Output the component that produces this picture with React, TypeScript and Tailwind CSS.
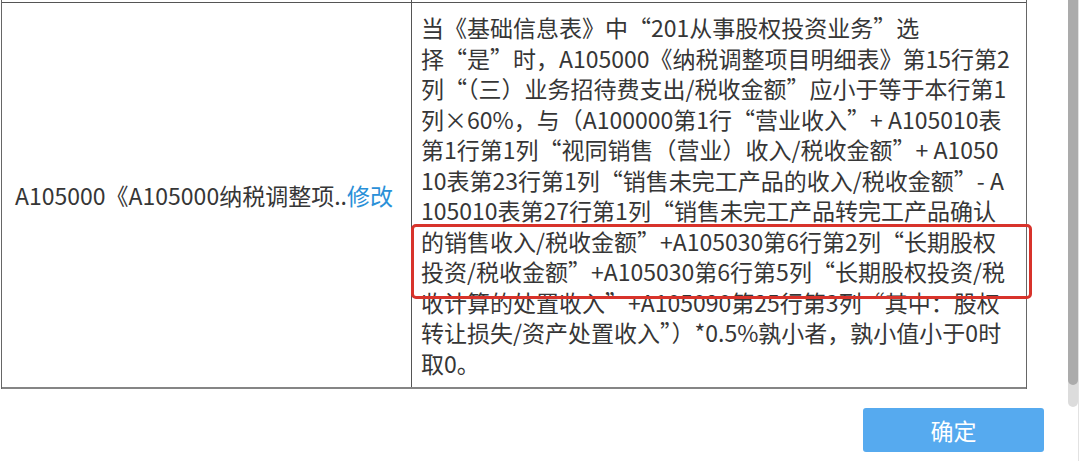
import React from "react";

const lines = [
  "当《基础信息表》中“201从事股权投资业务”选",
  "择“是”时，A105000《纳税调整项目明细表》第15行第2",
  "列“（三）业务招待费支出/税收金额”应小于等于本行第1",
  "列×60%，与（A100000第1行“营业收入”+ A105010表",
  "第1行第1列“视同销售（营业）收入/税收金额”+ A1050",
  "10表第23行第1列“销售未完工产品的收入/税收金额”- A",
  "105010表第27行第1列“销售未完工产品转完工产品确认",
  "的销售收入/税收金额”+A105030第6行第2列“长期股权",
  "投资/税收金额”+A105030第6行第5列“长期股权投资/税",
  "收计算的处置收入”+A105090第25行第3列“其中：股权",
  "转让损失/资产处置收入”）*0.5%孰小者，孰小值小于0时",
  "取0。",
];

export default function App() {
  return (
    <div
      lang="zh-CN"
      className="relative flex h-[461px] w-[1080px] overflow-hidden bg-white font-['Noto_Sans_CJK_SC',sans-serif] text-[#363636]"
    >
      <div className="flex w-[1068px] flex-col">
        <div className="ml-px w-[1026px] border-l border-r border-[#666]">
          <div className="flex h-[2px]">
            <div className="w-[410px] border-r border-[#555]" />
          </div>
          <div className="flex border-t border-b-2 border-t-[#555] border-b-[#858585]">
            <div className="flex w-[410px] shrink-0 items-center border-r border-[#555] pl-[13px] text-[23px] leading-[30px] whitespace-nowrap">
              <span>A105000《A105000纳税调整项..</span>
              <span className="text-[#2a90d8]">修改</span>
            </div>
            <div className="flex-1 pl-[9px] pt-[9px] pb-[9px] text-[23px] leading-[30.5px]">
              {lines.map((l, i) => (
                <div key={i} className="whitespace-nowrap">
                  {l}
                </div>
              ))}
            </div>
          </div>
        </div>
        <div className="mt-[19px] flex justify-end pr-[24px]">
          <button className="flex h-[44px] w-[181px] items-center justify-center rounded-[3px] bg-[#56aaef] text-[23px] text-white">
            确定
          </button>
        </div>
      </div>
      <div className="flex w-[12px]">
        <div className="w-[10px]">
          <div className="h-[407px] rounded-b-[5px] bg-[#dcdcdc]">
            <div className="h-[385px] rounded-b-[5px] bg-[#ababab]" />
          </div>
        </div>
        <div className="w-px bg-[#e2e2e2]" />
        <div className="w-px bg-white" />
      </div>
      <div className="absolute left-[411px] top-[224px] h-[75px] w-[621px] rounded-[5px] border-[3px] border-[#d8332b]" />
    </div>
  );
}
